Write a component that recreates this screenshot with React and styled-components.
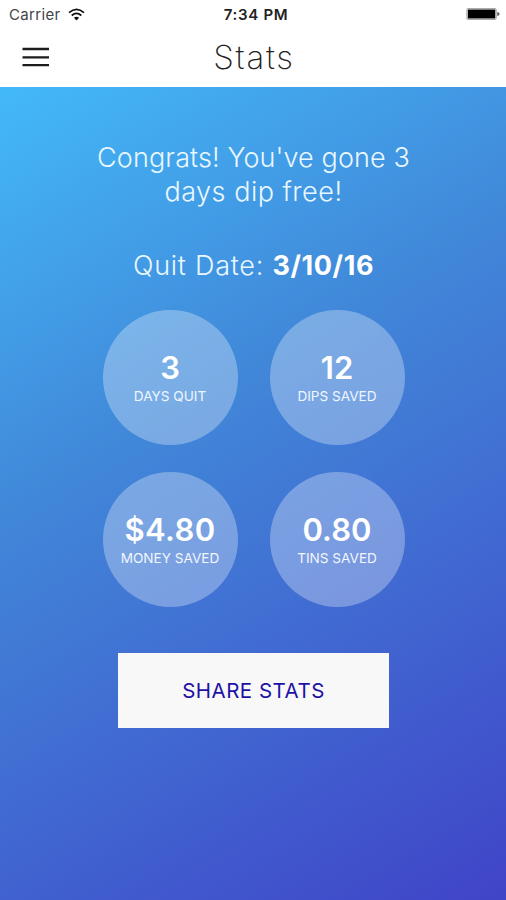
import React from "react";
import styled, { createGlobalStyle } from "styled-components";

const GlobalStyle = createGlobalStyle`
  * { box-sizing: border-box; }
  body { margin: 0; }
`;

const Screen = styled.div`
  width: 506px;
  height: 900px;
  display: flex;
  flex-direction: column;
  overflow: hidden;
  font-family: Inter, "Liberation Sans", sans-serif;
  background: #fff;
`;

const StatusBar = styled.header`
  height: 28px;
  flex: none;
  display: grid;
  grid-template-columns: 1fr auto 1fr;
  grid-template-rows: 28px;
  align-items: center;
  padding: 0 6px 0 9px;
  color: #222;
`;

const Carrier = styled.div`
  display: flex;
  align-items: center;
  gap: 7px;
  font-size: 15px;
  letter-spacing: 0.35px;
  line-height: 28px;
  color: #444;
`;

const CarrierName = styled.span`
  padding-top: 1px;
`;

const Clock = styled.time`
  font-size: 15px;
  font-weight: 600;
  letter-spacing: 0.7px;
  line-height: 28px;
  padding: 1px 0 0 3px;
`;

const Battery = styled.svg`
  justify-self: end;
`;

const NavBar = styled.nav`
  height: 58.5px;
  flex: none;
  display: grid;
  grid-template-columns: 60px 1fr 60px;
  align-items: center;
`;

const MenuButton = styled.button`
  border: 0;
  background: none;
  padding: 0 0 0 22px;
  height: 58px;
  display: flex;
  align-items: center;
`;

const Title = styled.h1`
  margin: 0;
  text-align: center;
  font-size: 33px;
  font-weight: 200;
  line-height: 56px;
  letter-spacing: 1.8px;
  padding-left: 2px;
  color: #222;
`;

const Content = styled.main`
  flex: 1;
  display: flex;
  flex-direction: column;
  align-items: center;
  padding: 54px 0 0 1px;
  background: linear-gradient(149deg, #43b9f9 0%, #4188d9 38%, #4044c8 100%);
  color: #fff;
`;

const Message = styled.p`
  margin: 0;
  text-align: center;
  font-size: 27px;
  font-weight: 300;
  line-height: 34px;
  letter-spacing: ${(p) => p.$spacing}px;
  color: #e9f7ff;
`;

const QuitDate = styled(Message)`
  margin-top: 40px;
  white-space: pre;

  strong {
    font-weight: 700;
    color: #fff;
    letter-spacing: 0.6px;
  }
`;

const StatGrid = styled.section`
  margin-top: 27px;
  display: grid;
  grid-template-columns: 135px 135px;
  column-gap: 32px;
  row-gap: 27px;
`;

const StatCircle = styled.div`
  height: 135px;
  border-radius: 50%;
  background: rgba(255, 255, 255, 0.3);
  display: flex;
  flex-direction: column;
  align-items: center;
  padding-top: 39px;
`;

const StatValue = styled.div`
  font-size: 31px;
  font-weight: 600;
  line-height: 38px;
  letter-spacing: ${(p) => p.$spacing}px;
`;

const StatLabel = styled.div`
  font-size: 13.6px;
  line-height: 19px;
  color: #f0f6ff;
  white-space: nowrap;
`;

const ShareButton = styled.button`
  margin-top: 46.5px;
  width: 271px;
  height: 75px;
  border: 0;
  background: #f8f8f8;
  color: #1d12a5;
  font: 400 20.5px/75px Inter, sans-serif;
  letter-spacing: 0.5px;
  padding: 0;
`;

const stats = [
  { value: "3", label: "DAYS QUIT", spacing: 0 },
  { value: "12", label: "DIPS SAVED", spacing: 0 },
  { value: "$4.80", label: "MONEY SAVED", spacing: 0.4 },
  { value: "0.80", label: "TINS SAVED", spacing: 0 },
];

function WifiIcon() {
  return (
    <svg width="17" height="13" viewBox="0 0 17 13" fill="none" stroke="#111" strokeWidth="1.7">
      <path d="M1 4.7Q8.5-2 16 4.7" />
      <path d="M3.7 7.5Q8.5 3.3 13.3 7.5" />
      <path d="M8.5 12.4L5.9 9.8Q8.5 7.8 11.1 9.8Z" fill="#111" stroke="none" />
    </svg>
  );
}

export default function App() {
  return (
    <Screen>
      <GlobalStyle />
      <StatusBar>
        <Carrier>
          <CarrierName>Carrier</CarrierName>
          <WifiIcon />
        </Carrier>
        <Clock>7:34 PM</Clock>
        <Battery width="34" height="12" viewBox="0 0 34 12">
          <rect x="0.8" y="0.5" width="29.5" height="11" rx="1.2" fill="#fff" stroke="#aaa" />
          <rect x="1.8" y="1.5" width="27.5" height="9" fill="#000" />
          <path d="M31.3 4Q33.6 4.5 33.6 6T31.3 8Z" fill="#555" />
        </Battery>
      </StatusBar>
      <NavBar>
        <MenuButton aria-label="Menu">
          <svg width="28" height="22" viewBox="0 0 28 22">
            <path d="M0.5 3H27M0.5 11.4H27M0.5 19.2H27" stroke="#1c1c1c" strokeWidth="2.3" />
          </svg>
        </MenuButton>
        <Title>Stats</Title>
      </NavBar>
      <Content>
        <Message $spacing={0.1}>Congrats! You've gone 3</Message>
        <Message $spacing={0.5}>days dip free!</Message>
        <QuitDate $spacing={0.75}>
          Quit Date: <strong>3/10/16</strong>
        </QuitDate>
        <StatGrid>
          {stats.map((s) => (
            <StatCircle key={s.label}>
              <StatValue $spacing={s.spacing}>{s.value}</StatValue>
              <StatLabel>{s.label}</StatLabel>
            </StatCircle>
          ))}
        </StatGrid>
        <ShareButton>SHARE STATS</ShareButton>
      </Content>
    </Screen>
  );
}
